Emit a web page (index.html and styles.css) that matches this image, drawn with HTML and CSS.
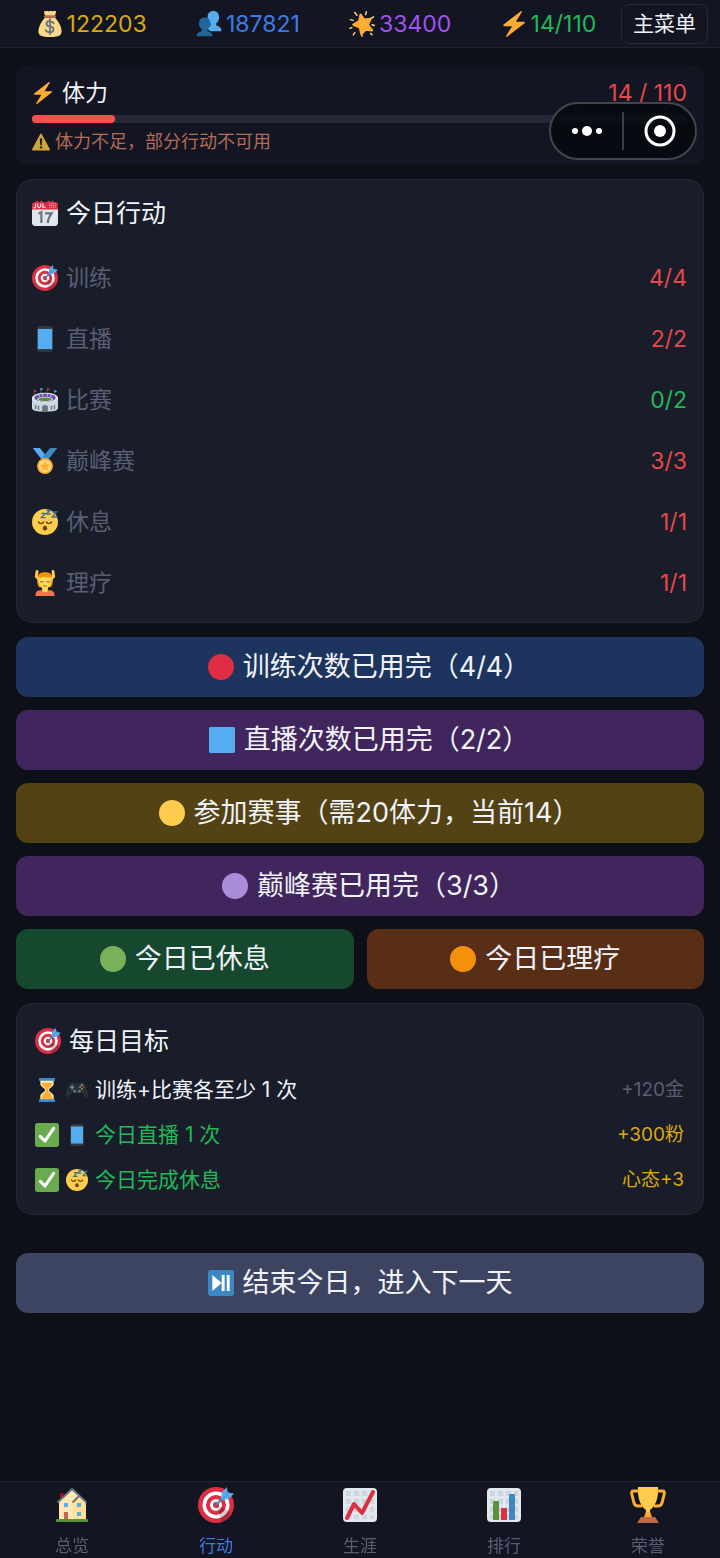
FILE: index.html
```html
<!DOCTYPE html>
<html lang="zh-CN">
<head>
    <meta charset="UTF-8">
    <meta name="viewport" content="width=device-width, initial-scale=1.0">
    <title>今日行动</title>
    <link rel="stylesheet" href="styles.css">
</head>
<body>
    <!-- Icon sprite -->
    <svg class="sprite" aria-hidden="true">
        <symbol id="money" viewBox="0 0 36 36">
            <path fill="#FDD888" d="M11 9C7 14 2 21 2 28c0 6 4 8 16 8s16-2 16-8c0-7-5-14-9-19z"/>
            <path fill="#FDD888" d="M10 0c2 1 3-1 5 0s4-1 6 0 3-1 5 0c1 2-1 5-2 7H12c-1-2-3-5-2-7z"/>
            <path fill="#BF6952" d="M11 6h14c2 0 2 3 0 3H11c-2 0-2-3 0-3z"/>
            <path fill="none" stroke="#67757F" stroke-width="2.600" stroke-linecap="round" d="M23 17c-1-2-3-3-5-3-6 0-7 7 0 7.500 7 .5 6 8 0 8-3 0-5-1-6-3M18 11v21"/>
        </symbol>
        <symbol id="fans" viewBox="0 0 36 36">
            <path fill="#55ACEE" d="M35 26c0-4-4-5-7-6v-3c2-1 4-4 4-8 0-6-3-9-8-9s-8 3-8 9c0 4 2 7 4 8v3l-5 4 5 4h15z"/>
            <path fill="#226699" d="M23 35c0-5-4-6-7-7v-3c2-1 4-4 4-7 0-6-3-9-8-9s-8 3-8 9c0 3 2 6 4 7v3c-3 1-7 2-7 7z"/>
        </symbol>
        <symbol id="star" viewBox="0 0 36 36">
            <path fill="#FFAC33" stroke="#FFAC33" stroke-width="3" stroke-linejoin="round" d="M16 5l5 7 9-1-4 8 6 8-9-1-6 6-2-9-9-4 8-5z"/>
            <path fill="none" stroke="#FFD983" stroke-width="2" stroke-linecap="round" d="M8 2l3 4M24 1l-1 4M34 8l-3 2M35 20l-3-1M32 33l-2-2M18 35v-1M6 33l2-3M1 24l3-1M2 12l4 1"/>
        </symbol>
        <symbol id="bolt" viewBox="0 0 36 36">
            <path fill="#FFAC33" d="M32.900 15.600C32.700 15.200 32.400 15 32 15H20.600L28.900 1.500c.5-.8-.4-1.800-1.300-1.300l-24 18.500c-.9.700-.4 2.300.7 2.300h11.100L7.100 34.500c-.5.8.4 1.800 1.300 1.300l24.200-19c.3-.3.5-.7.3-1.200z"/>
        </symbol>
        <symbol id="warning" viewBox="0 0 36 36">
            <path fill="#CDA53B" d="M2.700 35c-2.200 0-3-1.500-2-3.400L16.300 2.400c1-1.900 2.500-1.900 3.500 0l15.500 29.200c1 1.900.1 3.400-2 3.400z"/>
            <path fill="#231F20" d="M15.700 13.200c-.1-3.600 4.700-3.600 4.600 0l-.6 10.500c-.2 2-3.200 2-3.400 0z"/>
            <circle fill="#231F20" cx="18" cy="28.800" r="2.400"/>
        </symbol>
        <symbol id="calendar" viewBox="0 0 36 36">
            <path fill="#E0E7EC" d="M36 32c0 2.200-1.800 4-4 4H4c-2.200 0-4-1.800-4-4V9h36z"/>
            <path fill="#DD2E44" d="M30 3a2 2 0 1 0-4 0 2 2 0 0 0-1 0 2 2 0 1 0-4 0H15a2 2 0 1 0-4 0H9a2 2 0 1 0-4 0H3L0 5v8h36V5l-2-2z"/>
            <path fill="none" stroke="#F5F8FA" stroke-width="1.500" d="M5 5v5q-2 2-3 0M8 5v4q2 3 4 0V5M15 5v5h4"/>
            <path stroke="#F4ABBA" stroke-width="1.300" stroke-dasharray="1.500 1" d="M24 5h10M24 7.500h10M24 10h10"/>
            <path fill="none" stroke="#66757F" stroke-width="3" d="M9 19l4-2v15M18 18.500h9c-3 4-5 8-5 13.500"/>
        </symbol>
        <symbol id="target" viewBox="0 0 36 36">
            <circle fill="#DD2E44" cx="18" cy="18" r="18"/>
            <circle fill="#fff" cx="18" cy="18" r="13.500"/>
            <circle fill="#DD2E44" cx="18" cy="18" r="10"/>
            <circle fill="#fff" cx="18" cy="18" r="6"/>
            <circle fill="#DD2E44" cx="18" cy="18" r="3"/>
            <path opacity=".2" d="M18.200 18.300l14.700 6.600c-2 5-6 9-9 10z"/>
            <path stroke="#3B88C3" stroke-width="2" stroke-linecap="round" d="M18.500 17.500l9-9"/>
            <path fill="#55ACEE" d="M23 11l1-6 5-5 .5 5.500 6.500 1-5 5-6 2z"/>
            <path stroke="#3B88C3" d="M25 11l6-6"/>
        </symbol>
        <symbol id="phone" viewBox="0 0 36 36">
            <rect fill="#31373D" x="7" width="22" height="36" rx="3"/>
            <path fill="#55ACEE" d="M8 4h20v28H8z"/>
        </symbol>
        <symbol id="stadium" viewBox="0 0 36 36">
            <path fill="#CCD6DD" d="M0 15v14c0 4 8 5 18 5s18-1 18-5V15z"/>
            <ellipse fill="#E1E8ED" cx="18" cy="15" rx="18" ry="7"/>
            <ellipse fill="#744EAA" cx="18" cy="15" rx="15" ry="5.500"/>
            <ellipse fill="#CCD6DD" cx="18" cy="17" rx="11" ry="3.500"/>
            <ellipse fill="#5C913B" cx="18" cy="17" rx="9" ry="2.500"/>
            <path stroke="#E1E8ED" d="M8 9l3 5M14 8l1 5M22 8l-1 5M28 9l-3 5"/>
            <path fill="#66757F" d="M14 34v-6c0-4 8-4 8 0v6zM4 25h2v6l-2-1zM8 26h2v6l-2-1zM26 26h2v5l-2 1zM30 25h2v5l-2 1z"/>
            <path stroke="#66757F" stroke-width=".8" d="M3 12V4M12 9V1M21 9V1M31 12V4"/>
            <path fill="#DD2E44" d="M3 4l4 2-4 2zM21 1l4 2-4 2z"/>
            <path fill="#55ACEE" d="M12 1l4 2-4 2zM31 4l4 2-4 2z"/>
        </symbol>
        <symbol id="medal" viewBox="0 0 36 36">
            <path fill="#55ACEE" d="M1 0h10l11 14-7 4z"/>
            <path fill="#3B88C3" d="M35 0H25L14 14l7 4z"/>
            <circle fill="#FFAC33" cx="18" cy="25" r="11"/>
            <circle fill="#FFD983" cx="18" cy="25" r="8.500"/>
            <path fill="#FFAC33" d="M18 18l2.200 4.700 5.100.6-3.800 3.400 1 5.100-4.500-2.500-4.500 2.500 1-5.100-3.800-3.400 5.100-.6z"/>
        </symbol>
        <symbol id="sleep" viewBox="0 0 36 36">
            <circle fill="#FFCC4D" cx="18" cy="18" r="18"/>
            <path fill="none" stroke="#664500" stroke-width="2" stroke-linecap="round" d="M9 18c1 3 6 3 7 0M20 18c1 3 6 3 7 0"/>
            <ellipse fill="#664500" cx="18" cy="26.500" rx="3" ry="3.200"/>
            <path fill="none" stroke="#3B6F96" stroke-width="1.900" d="M13 6h5l-5 6h6M20 2h5l-5 5h6M28 4h6l-6 7h7"/>
        </symbol>
        <symbol id="massage" viewBox="0 0 36 36">
            <path fill="#F4900C" d="M7 13C7 5 12 3 18 3s11 2 11 10c0 5-1 9-3 11H10c-2-2-3-6-3-11z"/>
            <path fill="#F4744E" d="M5 36v-3c0-3 3-5 6-5h14c3 0 6 2 6 5v3z"/>
            <path fill="#FFDC5D" d="M14 23h8v6q-4 4-8 0z"/>
            <path fill="#FFDC5D" d="M9 13c3-1 4-3 6-4 4 2 8 1 10 1l2 4c0 7-4 12-9 12S9 21 9 13z"/>
            <path fill="none" stroke="#FFCC4D" stroke-width="4" stroke-linecap="round" d="M7 2l-1 7 3 3M29 2l1 7-3 3"/>
            <path fill="none" stroke="#855A21" stroke-width="1.400" stroke-linecap="round" d="M12 16q2 1.500 3.500 0M20.500 16q2 1.500 3.500 0M16 22h4"/>
        </symbol>
        <symbol id="hourglass" viewBox="0 0 36 36">
            <path fill="#FFE8B6" d="M8 3h20v6c0 4-7 6-7 9s7 5 7 9v6H8v-6c0-4 7-6 7-9s-7-5-7-9z"/>
            <path fill="#FFAC33" d="M10 7h16c0 5-6 7-6.500 11 0 4 6.500 5 6.500 12v2H10v-2c0-7 7-8 6.500-12C16 14 10 12 10 7z"/>
            <path fill="#3B88C3" d="M6 0h24v4H6zM6 32h24v4H6z"/>
        </symbol>
        <symbol id="gamepad" viewBox="0 0 36 36">
            <path fill="#292F33" d="M6 8c3-3 7-3 9-1h6c2-2 6-2 9 1 4 4 6 14 6 19 0 4-4 4-6 1l-5-7c-4 2-10 2-14 0l-5 7c-2 3-6 3-6-1C0 22 2 12 6 8z"/>
            <path stroke="#8899A6" stroke-width="2" d="M10 10v7M6.500 13.500h7"/>
            <g fill="#66757F"><circle cx="14" cy="20" r="2.500"/><circle cx="22" cy="20" r="2.500"/></g>
            <circle fill="#FFCC4D" cx="26" cy="10" r="1.500"/><circle fill="#DD2E44" cx="29" cy="13" r="1.500"/>
            <circle fill="#55ACEE" cx="23" cy="13" r="1.500"/><circle fill="#77B255" cx="26" cy="16" r="1.500"/>
        </symbol>
        <symbol id="check" viewBox="0 0 36 36">
            <rect fill="#6AAB4F" width="36" height="36" rx="4"/>
            <path fill="none" stroke="#fff" stroke-width="4.600" stroke-linecap="round" stroke-linejoin="round" d="M8 20l7 7L28 8"/>
        </symbol>
        <symbol id="dot" viewBox="0 0 36 36"><circle fill="currentColor" cx="18" cy="18" r="18"/></symbol>
        <symbol id="square" viewBox="0 0 36 36"><rect fill="currentColor" width="36" height="36" rx="2"/></symbol>
        <symbol id="playpause" viewBox="0 0 36 36">
            <rect fill="#3B88C3" width="36" height="36" rx="4"/>
            <path fill="#fff" d="M6 7l13 11L6 29zM19 7h4v22h-4zM26 7h4v22h-4z"/>
        </symbol>
        <symbol id="house" viewBox="0 0 36 36">
            <path fill="#A0041E" d="M6 6h4v8H6z"/>
            <path fill="#FFE8B6" d="M5 15L19 2l13 13v18H5z"/>
            <path fill="#FFCC4D" opacity=".3" d="M19 15l5-6 8 7v17H19z"/>
            <path fill="none" stroke="#66757F" stroke-width="1.800" stroke-linecap="round" stroke-linejoin="round" d="M4 15L18 2l14 13M19 15l6-6"/>
            <path fill="#55ACEE" d="M10 16h4v4h-4zM23 16h4v4h-4zM23 25h4v4h-4z"/>
            <path fill="#C1694F" d="M10 25h4v7h-4z"/>
            <rect fill="#5C913B" x="2" y="32" width="32" height="3" rx="1"/>
        </symbol>
        <symbol id="chart" viewBox="0 0 36 36">
            <rect fill="#E1E8ED" x="1" y="1" width="34" height="34" rx="4"/>
            <path fill="#CCD6DD" d="M4 4h5v5H4zM12 4h5v5h-5zM20 4h5v5h-5zM28 4h4v5h-4zM4 12h5v5H4zM12 12h5v5h-5zM20 12h5v5h-5zM28 12h4v5h-4zM4 20h5v5H4zM12 20h5v5h-5zM20 20h5v5h-5zM28 20h4v5h-4zM4 28h5v4H4zM12 28h5v4h-5zM20 28h5v4h-5zM28 28h4v4h-4z"/>
        </symbol>
        <symbol id="trend" viewBox="0 0 36 36">
            <use href="#chart"/>
            <path fill="none" stroke="#DD2E44" stroke-width="4" stroke-linecap="round" stroke-linejoin="round" d="M5 31l7-14 8 9L31 5"/>
        </symbol>
        <symbol id="bars" viewBox="0 0 36 36">
            <use href="#chart"/>
            <path fill="#5C913B" d="M7 33V15q0-1 1-1h4q1 0 1 1v18z"/>
            <path fill="#DD2E44" d="M15 33V22q0-1 1-1h4q1 0 1 1v11z"/>
            <path fill="#3B88C3" d="M23 33V8q0-1 1-1h4q1 0 1 1v25z"/>
        </symbol>
        <symbol id="trophy" viewBox="0 0 36 36">
            <path fill="none" stroke="#FFAC33" stroke-width="3" stroke-linejoin="round" d="M9 4H3q-2 0-1 4l2 8q1 3 4 3h4M27 4h6q2 0 1 4l-2 8q-1 3-4 3h-4"/>
            <path fill="#FFCC4D" d="M8 0h20c1 11-3 20-8 23 0 4 1 6 3 8H13c2-2 3-4 3-8C11 20 7 11 8 0z"/>
            <path fill="#FFAC33" d="M16 25h4l2 6h-8z"/>
            <path fill="#C1694F" d="M11 30h14l4 6H7z"/>
        </symbol>
    </svg>

    <!-- Top bar -->
    <header class="topbar">
        <div class="stats">
            <span class="stat gold"><svg class="icon"><use href="#money"/></svg>122203</span>
            <span class="stat blue"><svg class="icon"><use href="#fans"/></svg>187821</span>
            <span class="stat purple"><svg class="icon"><use href="#star"/></svg>33400</span>
            <span class="stat green"><svg class="icon"><use href="#bolt"/></svg>14/110</span>
        </div>
        <button class="menu-btn" type="button">主菜单</button>
    </header>

    <!-- Mini program capsule -->
    <div class="capsule">
        <button type="button" aria-label="更多">
            <svg width="32" height="32" viewBox="0 0 32 32" fill="#fff"><circle cx="4" cy="16" r="3"/><circle cx="16" cy="16" r="5"/><circle cx="28" cy="16" r="3"/></svg>
        </button>
        <button type="button" aria-label="关闭">
            <svg width="32" height="32" viewBox="0 0 32 32"><circle cx="16" cy="16" r="14" fill="none" stroke="#fff" stroke-width="3"/><circle cx="16" cy="16" r="6" fill="#fff"/></svg>
        </button>
    </div>

    <main class="content">
        <section class="stamina">
            <div class="row">
                <span class="label"><svg class="icon small"><use href="#bolt"/></svg>体力</span>
                <span class="red">14 / 110</span>
            </div>
            <div class="track"><div class="fill" style="width: 12.7%"></div></div>
            <p class="warning"><svg class="icon tiny"><use href="#warning"/></svg>体力不足，部分行动不可用</p>
        </section>

        <section class="card actions">
            <h2><svg class="icon"><use href="#calendar"/></svg>今日行动</h2>
            <ul>
                <li><span class="label"><svg class="icon"><use href="#target"/></svg>训练</span><span class="red">4/4</span></li>
                <li><span class="label"><svg class="icon"><use href="#phone"/></svg>直播</span><span class="red">2/2</span></li>
                <li><span class="label"><svg class="icon"><use href="#stadium"/></svg>比赛</span><span class="green">0/2</span></li>
                <li><span class="label"><svg class="icon"><use href="#medal"/></svg>巅峰赛</span><span class="red">3/3</span></li>
                <li><span class="label"><svg class="icon"><use href="#sleep"/></svg>休息</span><span class="red">1/1</span></li>
                <li><span class="label"><svg class="icon"><use href="#massage"/></svg>理疗</span><span class="red">1/1</span></li>
            </ul>
        </section>

        <div class="buttons">
            <button class="btn count train" type="button"><svg class="icon"><use href="#dot"/></svg>训练次数已用完（4/4）</button>
            <button class="btn count live" type="button"><svg class="icon"><use href="#square"/></svg>直播次数已用完（2/2）</button>
            <button class="btn count match" type="button"><svg class="icon"><use href="#dot"/></svg>参加赛事（需20体力，当前14）</button>
            <button class="btn count peak" type="button"><svg class="icon"><use href="#dot"/></svg>巅峰赛已用完（3/3）</button>
            <button class="btn rest" type="button"><svg class="icon"><use href="#dot"/></svg>今日已休息</button>
            <button class="btn therapy" type="button"><svg class="icon"><use href="#dot"/></svg>今日已理疗</button>
        </div>

        <section class="card goals">
            <h2><svg class="icon"><use href="#target"/></svg>每日目标</h2>
            <ul>
                <li><span class="label"><svg class="icon"><use href="#hourglass"/></svg><svg class="icon small"><use href="#gamepad"/></svg>训练+比赛各至少 1 次</span><span class="reward">+120金</span></li>
                <li class="done"><span class="label"><svg class="icon"><use href="#check"/></svg><svg class="icon small"><use href="#phone"/></svg>今日直播 1 次</span><span class="reward">+300粉</span></li>
                <li class="done"><span class="label"><svg class="icon"><use href="#check"/></svg><svg class="icon small"><use href="#sleep"/></svg>今日完成休息</span><span class="reward">心态+3</span></li>
            </ul>
        </section>

        <button class="btn next-day" type="button"><svg class="icon"><use href="#playpause"/></svg>结束今日，进入下一天</button>
    </main>

    <!-- Tab bar -->
    <nav class="tabbar">
        <a href="#overview"><svg class="icon"><use href="#house"/></svg>总览</a>
        <a href="#action" class="active"><svg class="icon"><use href="#target"/></svg>行动</a>
        <a href="#career"><svg class="icon"><use href="#trend"/></svg>生涯</a>
        <a href="#rank"><svg class="icon"><use href="#bars"/></svg>排行</a>
        <a href="#honor"><svg class="icon"><use href="#trophy"/></svg>荣誉</a>
    </nav>
</body>
</html>
```

FILE: styles.css
```css
* {
    box-sizing: border-box;
}

body {
    margin: 0;
    min-height: 100vh;
    display: flex;
    flex-direction: column;
    background-color: #0d1017;
    color: #f1f3f9;
    font-family: Inter, "Noto Sans CJK SC", sans-serif;
    font-size: 23px;
    font-weight: 400;
    line-height: 32px;
}

button {
    font: inherit;
    color: inherit;
    cursor: pointer;
}

h2, p, ul {
    margin: 0;
    padding: 0;
    font-weight: inherit;
}

ul {
    list-style: none;
}

.sprite {
    position: absolute;
    width: 0;
    height: 0;
}

.icon {
    width: 26px;
    height: 26px;
    flex: none;
}

.icon.small {
    width: 22px;
    height: 22px;
}

.icon.tiny {
    width: 18px;
    height: 18px;
}

.gold { color: #dcaa0c; }
.blue { color: #3b7ce8; }
.purple { color: #a053ee; }
.green { color: #22b85a; }
.red { color: #e5474b; }

/* Top bar */
.topbar {
    display: flex;
    align-items: center;
    height: 48px;
    padding: 0 12px;
    background-color: #131622;
    border-bottom: 1px solid #20232f;
}

.stats {
    flex: 1;
    display: flex;
    justify-content: space-around;
}

.stat {
    display: flex;
    align-items: center;
    gap: 4px;
}

.menu-btn {
    height: 40px;
    padding: 0 11px;
    border: 1px solid #272a37;
    border-radius: 8px;
    background: none;
    font-size: 21px;
}

/* Capsule */
.capsule {
    position: absolute;
    top: 102px;
    right: 23px;
    display: flex;
    align-items: center;
    width: 148px;
    height: 58px;
    border: 2px solid #43454b;
    border-radius: 29px;
    background: rgba(6, 7, 14, 0.8);
}

.capsule button {
    flex: 1;
    display: flex;
    align-items: center;
    justify-content: center;
    height: 38px;
    padding: 0;
    border: 0;
    background: none;
}

.capsule button + button {
    border-left: 2px solid #3d3f46;
}

/* Content */
.content {
    flex: 1;
    display: flex;
    flex-direction: column;
    gap: 14px;
    padding: 17px 16px;
}

.label {
    display: flex;
    align-items: center;
    gap: 8px;
}

.stamina {
    height: 100px;
    padding: 12px 17px 0 16px;
    border-radius: 12px;
    background-color: #131622;
}

.row {
    display: flex;
    justify-content: space-between;
    align-items: center;
    height: 32px;
}

.track {
    height: 8px;
    margin-top: 6px;
    border-radius: 4px;
    background-color: #262838;
}

.fill {
    height: 100%;
    border-radius: 4px;
    background-color: #ff4d4f;
}

.warning {
    display: flex;
    align-items: center;
    gap: 5px;
    margin-top: 5px;
    color: #b56b57;
    font-size: 18px;
    line-height: 28px;
}

/* Cards */
.card {
    border: 1px solid #242937;
    border-radius: 16px;
    background-color: #181d29;
}

.card h2 {
    display: flex;
    align-items: center;
    gap: 8px;
    font-size: 25px;
    line-height: 36px;
}

.card li {
    display: flex;
    justify-content: space-between;
    align-items: center;
}

.actions {
    padding: 15px 16px 9px 15px;
}

.actions h2 {
    margin-bottom: 16px;
}

.actions li {
    height: 61px;
}

.actions .label {
    color: #5a5d74;
}

/* Buttons */
.buttons {
    display: grid;
    grid-template-columns: 1fr 1fr;
    gap: 13px;
}

.btn {
    grid-column: span 2;
    display: flex;
    align-items: center;
    justify-content: center;
    gap: 9px;
    height: 60px;
    padding: 0;
    border: 0;
    border-radius: 12px;
    font-size: 27px;
    line-height: 40px;
}

/* balances the blank half of the closing full-width bracket */
.count {
    padding-left: 18px;
}

.train { background-color: #1d355e; }
.train .icon { color: #dd2e44; }
.live { background-color: #40265d; }
.live .icon { color: #55acee; }
.match { background-color: #524214; }
.match .icon { color: #ffcc4d; }
.peak { background-color: #40265d; }
.peak .icon { color: #aa8dd8; }
.rest { background-color: #15482f; }
.rest .icon { color: #78b159; }
.therapy { background-color: #592e17; }
.therapy .icon { color: #f4900c; }

.rest,
.therapy {
    grid-column: span 1;
}

.next-day {
    margin-top: 24px;
    background-color: #3d4462;
}

/* Daily goals */
.goals {
    padding: 19px 19px 12px 18px;
}

.goals h2 {
    margin-bottom: 8px;
}

.goals li {
    height: 45px;
    font-size: 21px;
}

.goals .label {
    gap: 7px;
}

.goals li .icon {
    width: 24px;
}

.goals li .icon.small {
    width: 22px;
}

.done .label {
    color: #22b85a;
}

.reward {
    color: #5a5d74;
    font-size: 19px;
}

.done .reward {
    color: #dcaa0c;
}

/* Tab bar */
.tabbar {
    position: sticky;
    bottom: 0;
    display: flex;
    height: 77px;
    padding-top: 5px;
    border-top: 1px solid #222634;
    background-color: #131622;
}

.tabbar a {
    flex: 1;
    display: flex;
    flex-direction: column;
    align-items: center;
    gap: 10px;
    color: #5a5d74;
    font-size: 17px;
    line-height: 26px;
    text-decoration: none;
}

.tabbar .icon {
    width: 36px;
    height: 36px;
}

.tabbar .active {
    color: #3b7ce8;
}
```
